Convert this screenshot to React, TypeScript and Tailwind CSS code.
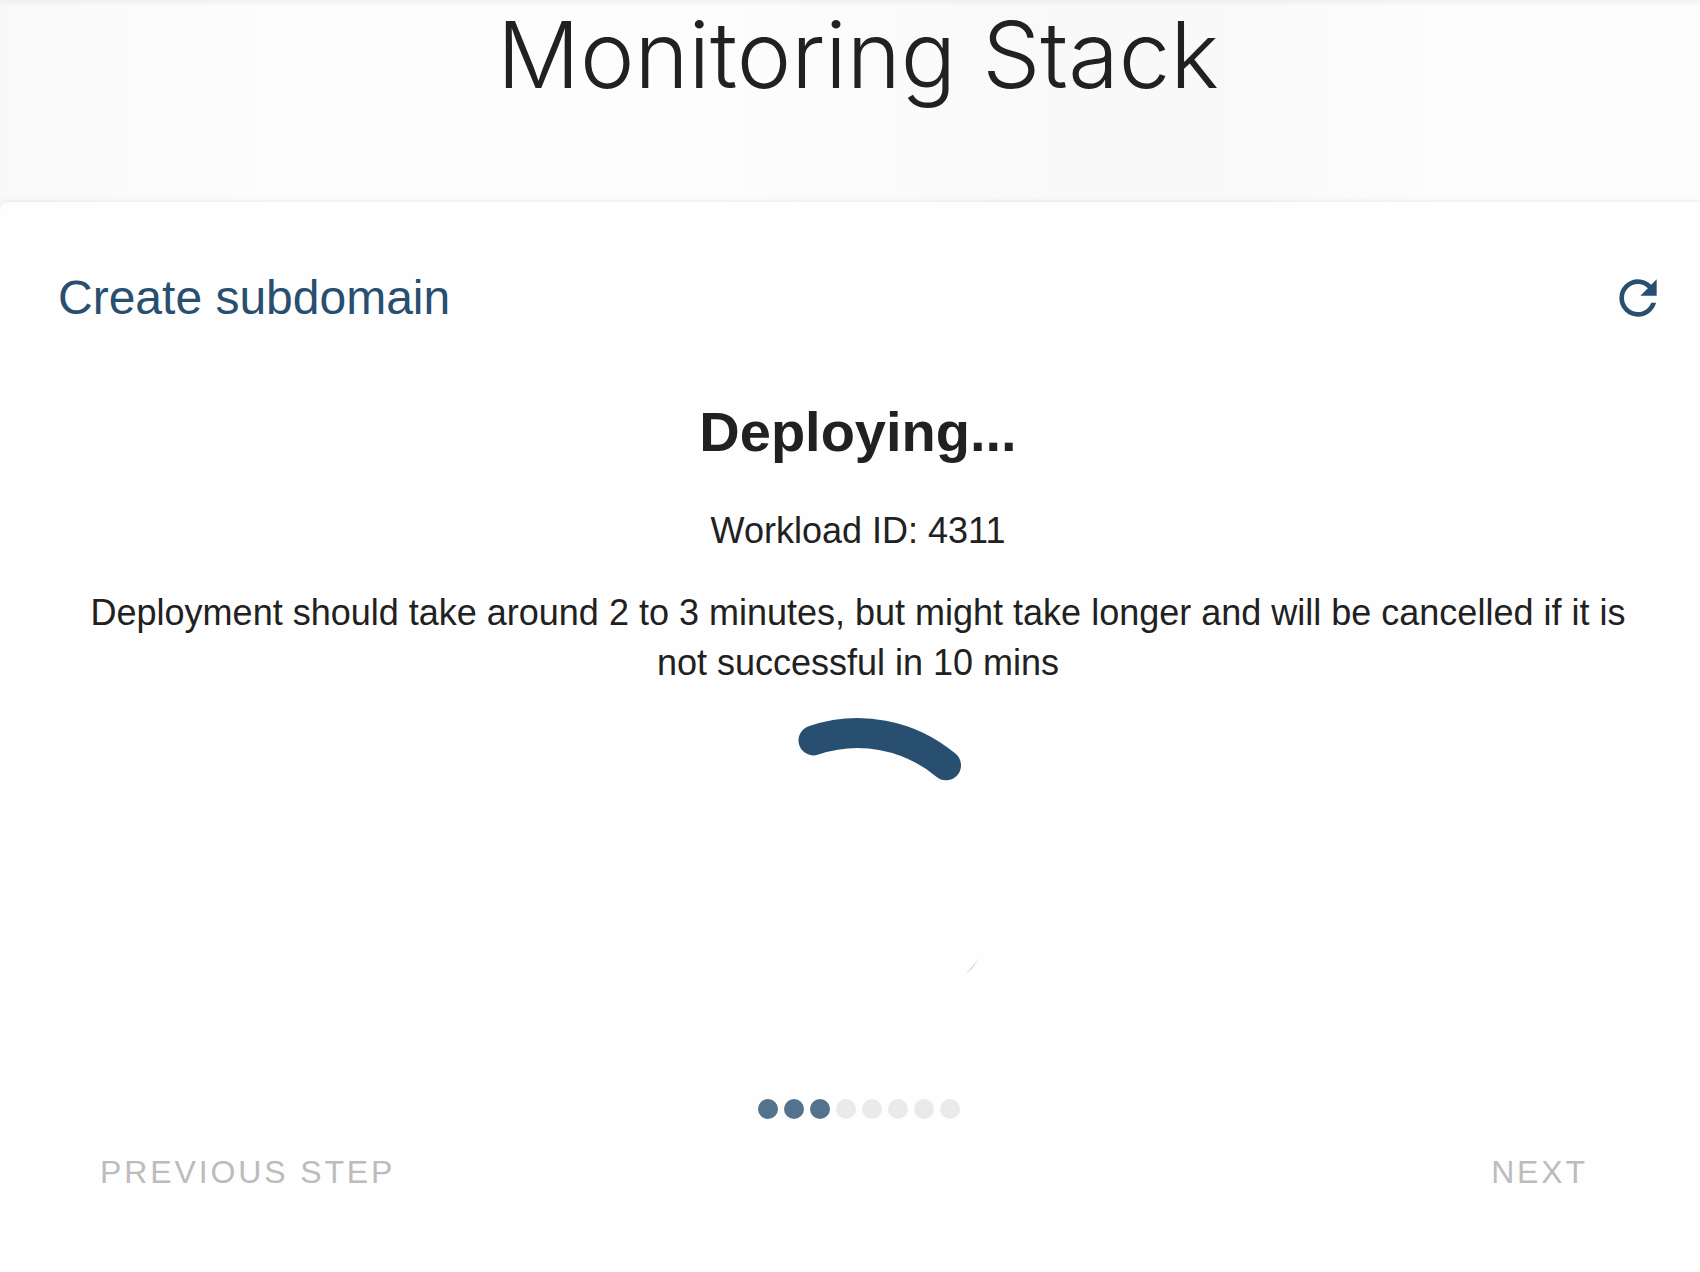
const TOTAL_STEPS = 8;
const COMPLETED_STEPS = 3;

function RefreshIcon() {
  return (
    <svg viewBox="0 0 24 24" className="size-14" fill="currentColor" aria-hidden="true">
      <path d="M17.65 6.35C16.2 4.9 14.21 4 12 4a8 8 0 0 0-8 8 8 8 0 0 0 8 8c3.73 0 6.84-2.55 7.73-6h-2.08c-.82 2.33-3.04 4-5.65 4a6 6 0 0 1-6-6 6 6 0 0 1 6-6c1.66 0 3.14.69 4.22 1.78L13 11h7V4l-2.35 2.35Z" />
    </svg>
  );
}

function Spinner() {
  return (
    <svg
      viewBox="0 0 308 308"
      className="mx-auto block size-[308px]"
      fill="none"
      role="progressbar"
      aria-label="Deploying"
    >
      <path
        d="M109.5 24.4A137 137 0 0 1 242 49.3"
        stroke="#284f70"
        strokeWidth="30"
        strokeLinecap="round"
      />
      <path d="M261 259L275 243Q269 252 261 259Z" fill="#284f70" opacity=".4" />
    </svg>
  );
}

export default function App() {
  return (
    <div className="min-h-screen bg-[#fafafa] font-['Liberation_Sans',Arial,sans-serif] text-[#212121]">
      <header className="bg-[linear-gradient(to_right,#f9f9f9_0%,#fdfdfd_18%,#fdfdfd_40%,#f9f9f9_62%,#f9f9f9_72%,#fdfdfd_86%,#fdfdfd_100%)] pt-[5px] pb-[97px] pl-4 shadow-[inset_0_6px_6px_-4px_rgba(0,0,0,0.06)]">
        <h1 className="text-center font-['Inter','Liberation_Sans',sans-serif] text-[92px] leading-[100px] font-light">
          Monitoring Stack
        </h1>
      </header>

      <main className="min-h-[1070px] rounded-tl-lg bg-[#fefefe] pt-16 pr-[34px] pl-[58px] shadow-[0_0_6px_rgba(0,0,0,0.1)]">
        <div className="flex items-center justify-between text-[#284f70]">
          <h2 className="text-[48px] leading-[64px]">Create subdomain</h2>
          <button type="button" aria-label="Refresh">
            <RefreshIcon />
          </button>
        </div>

        <section className="pt-[60px] pr-7 pl-5 text-center text-[36px] leading-[50px]">
          <h3 className="text-[56px] leading-[84px] font-bold">Deploying...</h3>
          <p className="mt-8">Workload ID: 4311</p>
          <p className="mt-8">
            Deployment should take around 2 to 3 minutes, but might take longer and will be cancelled if it is not
            successful in 10 mins
          </p>
          <div className="mt-7">
            <Spinner />
          </div>
        </section>

        <ol className="mt-[75px] flex justify-center gap-1.5 pr-1.5" aria-label="Progress">
          {Array.from({ length: TOTAL_STEPS }, (_, i) => (
            <li key={i} className={i < COMPLETED_STEPS ? "size-5 rounded-full bg-[#53728d]" : "size-5 rounded-full bg-[#e9eaec]"} />
          ))}
        </ol>

        <footer className="mt-7 flex justify-between pr-[78px] pl-[42px] text-[32px] leading-[50px] text-[#bcbcbc]">
          <button type="button" disabled className="tracking-[0.09em] uppercase">
            Previous step
          </button>
          <button type="button" disabled className="tracking-[0.09em] uppercase">
            Next
          </button>
        </footer>
      </main>
    </div>
  );
}
